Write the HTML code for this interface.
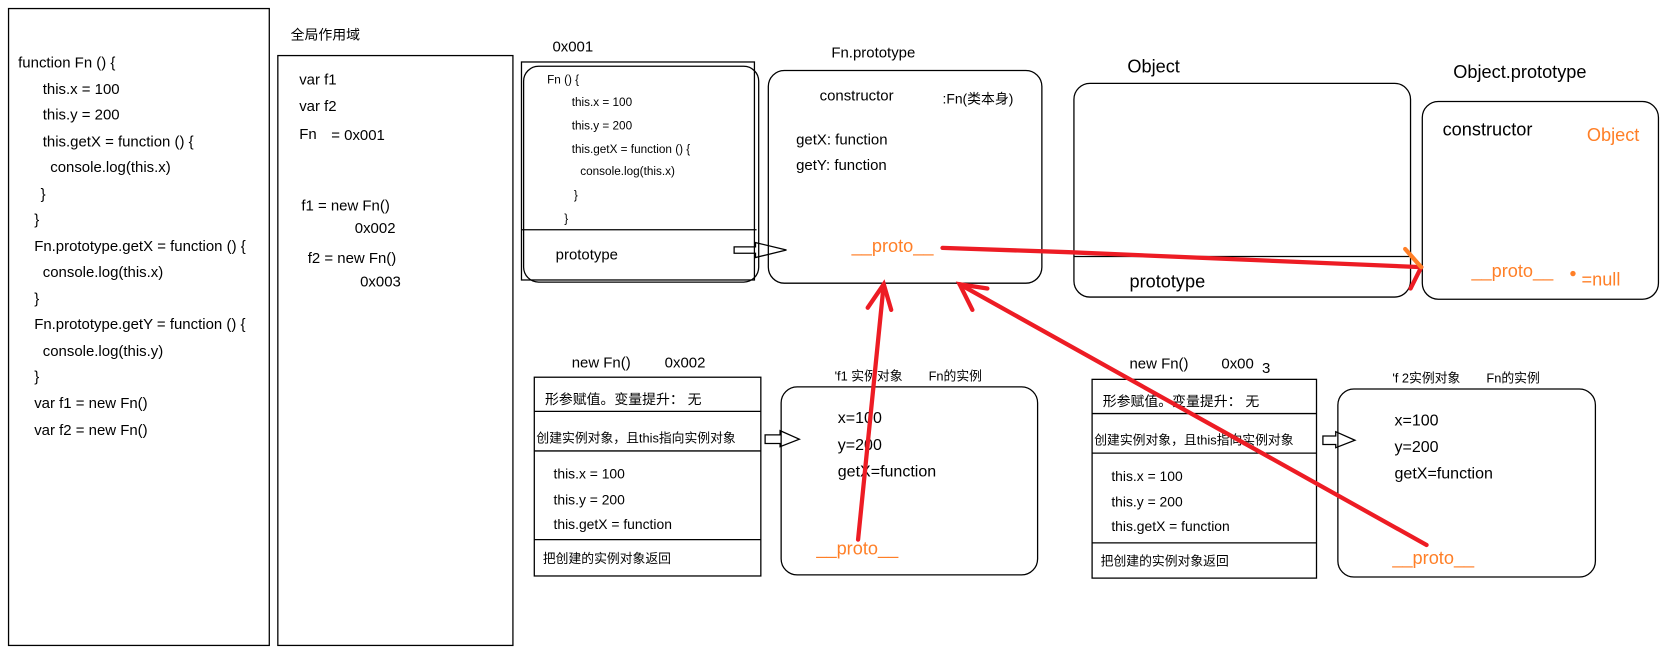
<!DOCTYPE html>
<html><head><meta charset="utf-8"><style>
html,body{margin:0;padding:0;background:#fff;}
svg{display:block;}
text{font-family:"Liberation Sans","Noto Sans CJK SC",sans-serif;fill:#000;}
.o{fill:#ff7f27;}
</style></head><body>
<svg width="1667" height="648" viewBox="0 0 1560 606.4" xmlns="http://www.w3.org/2000/svg">
<g fill="none" stroke="#000" stroke-width="1.2">
<rect x="8" y="8" width="244" height="596"/>
<rect x="260" y="52" width="220" height="552"/>
<rect x="488" y="58" width="218" height="204"/>
<rect x="490" y="62" width="220" height="202" rx="14"/>
<line x1="488" y1="215" x2="708" y2="215"/>
<path d="M687 231 H707 V227 L736 234 L707 241 V237 H687 Z"/>
<rect x="719" y="66" width="256" height="199" rx="15"/>
<rect x="1005" y="78" width="315" height="200" rx="15"/>
<line x1="1005" y1="240" x2="1320" y2="240"/>
<rect x="1331" y="95" width="221" height="185" rx="15"/>
<rect x="500" y="353" width="212" height="186"/>
<line x1="500" y1="385" x2="712" y2="385"/>
<line x1="500" y1="422" x2="712" y2="422"/>
<line x1="500" y1="505" x2="712" y2="505"/>
<path d="M716 407 H730 V403 L748 411 L730 418 V415 H716 Z"/>
<rect x="731" y="362" width="240" height="176" rx="15"/>
<rect x="1022" y="355" width="210" height="186"/>
<line x1="1022" y1="387" x2="1232" y2="387"/>
<line x1="1022" y1="424" x2="1232" y2="424"/>
<line x1="1022" y1="508" x2="1232" y2="508"/>
<path d="M1238 408 H1250 V404 L1268 412 L1250 419 V416 H1238 Z"/>
<rect x="1252" y="364" width="241" height="176" rx="15"/>
</g>
<text x="272" y="37" font-size="13">全局作用域</text>
<g font-size="14">
<text x="17" y="63">function Fn () {</text>
<text x="40" y="88">this.x = 100</text>
<text x="40" y="112">this.y = 200</text>
<text x="40" y="137">this.getX = function () {</text>
<text x="47" y="161">console.log(this.x)</text>
<text x="38" y="186">}</text>
<text x="32" y="210">}</text>
<text x="32" y="235">Fn.prototype.getX = function () {</text>
<text x="40" y="259">console.log(this.x)</text>
<text x="32" y="284">}</text>
<text x="32" y="308">Fn.prototype.getY = function () {</text>
<text x="40" y="333">console.log(this.y)</text>
<text x="32" y="357">}</text>
<text x="32" y="382">var f1 = new Fn()</text>
<text x="32" y="407">var f2 = new Fn()</text>
<text x="280" y="79">var f1</text>
<text x="280" y="104">var f2</text>
<text x="280" y="130">Fn</text>
<text x="310" y="131">= 0x001</text>
<text x="282" y="197">f1 = new Fn()</text>
<text x="332" y="218">0x002</text>
<text x="288" y="246">f2 = new Fn()</text>
<text x="337" y="268">0x003</text>
<text x="517" y="48">0x001</text>
<text x="778" y="54">Fn.prototype</text>
<text x="767" y="94">constructor</text>
<text x="882" y="97" font-size="13">:Fn(类本身)</text>
<text x="745" y="135">getX: function</text>
<text x="745" y="159">getY: function</text>
<text x="520" y="243">prototype</text>
<text x="535" y="344">new Fn()</text>
<text x="622" y="344">0x002</text>
<text x="1057" y="345">new Fn()</text>
<text x="1143" y="345">0x00</text><text x="1181" y="349">3</text>
</g>
<g font-size="11">
<text x="512" y="78">Fn () {</text>
<text x="535" y="99">this.x = 100</text>
<text x="535" y="121">this.y = 200</text>
<text x="535" y="143">this.getX = function () {</text>
<text x="543" y="164">console.log(this.x)</text>
<text x="537" y="186">}</text>
<text x="528" y="208">}</text>
<text x="781" y="356" font-size="12">'f1 实例对象</text>
<text x="869" y="356" font-size="12">Fn的实例</text>
<text x="1303" y="358" font-size="12">'f 2实例对象</text>
<text x="1391" y="358" font-size="12">Fn的实例</text>
</g>
<g font-size="13">
<text x="510" y="378">形参赋值。变量提升： 无</text>
<text x="502" y="414" font-size="12">创建实例对象，且this指向实例对象</text>
<text x="518" y="448">this.x = 100</text>
<text x="518" y="472">this.y = 200</text>
<text x="518" y="495">this.getX = function</text>
<text x="508" y="527" font-size="12">把创建的实例对象返回</text>
<text x="1032" y="380">形参赋值。变量提升： 无</text>
<text x="1024" y="416" font-size="12">创建实例对象，且this指向实例对象</text>
<text x="1040" y="450">this.x = 100</text>
<text x="1040" y="474">this.y = 200</text>
<text x="1040" y="497">this.getX = function</text>
<text x="1030" y="529" font-size="12">把创建的实例对象返回</text>
</g>
<g font-size="15">
<text x="784" y="396">x=100</text>
<text x="784" y="421">y=200</text>
<text x="784" y="446">getX=function</text>
<text x="1305" y="398">x=100</text>
<text x="1305" y="423">y=200</text>
<text x="1305" y="448">getX=function</text>
</g>
<text x="1055" y="68" font-size="17">Object</text>
<text x="1360" y="73" font-size="17">Object.prototype</text>
<text x="1350" y="127" font-size="17">constructor</text>
<text x="1057" y="269" font-size="17">prototype</text>
<g font-size="17">
<text class="o" x="1485" y="132">Object</text>
<text class="o" x="797" y="236">__proto__</text>
<text class="o" x="1377" y="259">__proto__</text>
<text class="o" x="1480" y="267">=null</text>
<text class="o" x="764" y="519">__proto__</text>
<text class="o" x="1303" y="528">__proto__</text>
</g>
<circle cx="1472" cy="256" r="2.5" fill="#ff7f27"/>
<g stroke="#ed1c24" stroke-width="4" fill="none" stroke-linecap="round">
<path d="M882 232 L1000 236 L1330 250"/>
<path d="M1330 250 L1320 270"/>
<path d="M803 505 L827 266"/>
<path d="M812 288 L827 266 L834 290"/>
<path d="M1335 510 L898 266"/>
<path d="M910 290 L898 266 L924 270"/>
</g>
<path d="M1315 233 L1330 250" stroke="#ff7f27" stroke-width="4" stroke-linecap="round"/>
</svg>
</body></html>
